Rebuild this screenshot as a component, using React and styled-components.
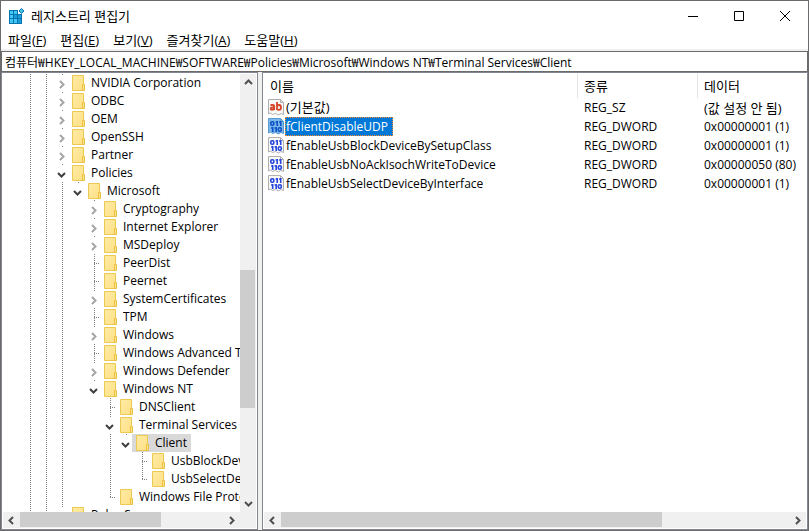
import React, { useState } from 'react';
import styled, { createGlobalStyle } from 'styled-components';

const colors = {
    frame: '#6b6b6e',
    paneBorder: '#828790',
    face: '#f0f0f0',
    thumb: '#cdcdcd',
    arrow: '#505050',
    dots: '#808080',
    select: '#0078d7',
};

const GlobalStyle = createGlobalStyle`
    * {
        box-sizing: border-box;
    }

    html, body, #root {
        height: 100%;
        margin: 0;
    }

    body, button, input {
        font-family: "Open Sans", "Noto Sans CJK KR", sans-serif;
        font-size: 12px;
        line-height: 18px;
        color: #000;
    }

    button {
        border: none;
        padding: 0;
        background: none;
    }
`;

/* each letter in cells is one 16px step of the indent:
   | line, - blank, t branch, l last branch, > closed, v open */
const keys = [
    { cells: '||>', name: 'NVIDIA Corporation' },
    { cells: '||>', name: 'ODBC' },
    { cells: '||>', name: 'OEM' },
    { cells: '||>', name: 'OpenSSH' },
    { cells: '||>', name: 'Partner' },
    { cells: '||v', name: 'Policies' },
    { cells: '|||v', name: 'Microsoft' },
    { cells: '|||->', name: 'Cryptography' },
    { cells: '|||->', name: 'Internet Explorer' },
    { cells: '|||->', name: 'MSDeploy' },
    { cells: '|||-t', name: 'PeerDist' },
    { cells: '|||-t', name: 'Peernet' },
    { cells: '|||->', name: 'SystemCertificates' },
    { cells: '|||-t', name: 'TPM' },
    { cells: '|||->', name: 'Windows' },
    { cells: '|||-t', name: 'Windows Advanced Threat Protection' },
    { cells: '|||->', name: 'Windows Defender' },
    { cells: '|||-v', name: 'Windows NT' },
    { cells: '|||--t', name: 'DNSClient' },
    { cells: '|||--v', name: 'Terminal Services' },
    { cells: '|||--|v', name: 'Client' },
    { cells: '|||--|-t', name: 'UsbBlockDeviceBySetupClasses' },
    { cells: '|||--|-l', name: 'UsbSelectDeviceByInterfaces' },
    { cells: '|||--l', name: 'Windows File Protection' },
    { cells: '||>', name: 'Pulse Secure' },
];

const values = [
    { name: '(기본값)', type: 'REG_SZ', data: '(값 설정 안 됨)' },
    { name: 'fClientDisableUDP', type: 'REG_DWORD', data: '0x00000001 (1)' },
    { name: 'fEnableUsbBlockDeviceBySetupClass', type: 'REG_DWORD', data: '0x00000001 (1)' },
    { name: 'fEnableUsbNoAckIsochWriteToDevice', type: 'REG_DWORD', data: '0x00000050 (80)' },
    { name: 'fEnableUsbSelectDeviceByInterface', type: 'REG_DWORD', data: '0x00000001 (1)' },
];

const menus = [
    ['파일', 'F'],
    ['편집', 'E'],
    ['보기', 'V'],
    ['즐겨찾기', 'A'],
    ['도움말', 'H'],
];

const Window = styled.div`
    display: flex;
    flex-direction: column;
    height: 100vh;
    border: 1px solid ${colors.frame};
    background: #fff;
    overflow: hidden;
`;

const TitleBar = styled.header`
    display: flex;
    align-items: center;
    height: 29px;
    padding-left: 7px;
    flex: none;
`;

const Title = styled.h1`
    flex: 1;
    margin: 0 0 0 6px;
    font-size: 13px;
    font-weight: normal;
`;

const CaptionButton = styled.button`
    display: flex;
    align-items: center;
    justify-content: center;
    width: 46px;
    height: 29px;
`;

const MenuBar = styled.nav`
    display: flex;
    height: 21px;
    flex: none;
    border-bottom: 2px solid ${colors.face};
`;

const MenuButton = styled.button`
    padding: 0 7px;
    font-size: 13px;
    white-space: nowrap;
`;

const Address = styled.input`
    flex: none;
    width: 100%;
    height: 21px;
    padding: 0 3px;
    border: 1px solid ${colors.frame};
    border-radius: 0;
    background: #fff;
    outline: none;
`;

const Panes = styled.main`
    display: flex;
    gap: 4px;
    flex: 1;
    min-height: 0;
    background: ${colors.face};
`;

const Pane = styled.section`
    display: flex;
    flex-direction: column;
    flex: ${props => (props.$width ? 'none' : '1')};
    width: ${props => props.$width || 'auto'};
    min-width: 0;
    padding: 1px;
    border: 1px solid ${colors.paneBorder};
    background: #fff;
`;

const PaneBody = styled.div`
    display: flex;
    flex: 1;
    min-height: 0;
`;

const Tree = styled.ul`
    flex: 1;
    min-width: 0;
    margin: 0;
    padding: 0 0 0 17px;
    list-style: none;
    overflow: hidden;
`;

const TreeRow = styled.li`
    display: flex;
    height: 18px;
    white-space: nowrap;
`;

const vertical = `repeating-linear-gradient(to bottom, ${colors.dots} 0 1px, transparent 1px 2px) 10px 0 / 1px`;
const across = `repeating-linear-gradient(to right, ${colors.dots} 0 1px, transparent 1px 2px) 10px 9px / 6px 1px no-repeat`;

const guides = {
    '|': `${vertical} 18px no-repeat`,
    '-': 'none',
    t: `${vertical} 18px no-repeat, ${across}`,
    l: `${vertical} 10px no-repeat, ${across}`,
};

const Guide = styled.span`
    flex: none;
    width: 16px;
    height: 18px;
    background: ${props => guides[props.$kind]};
`;

const Toggle = styled.button`
    display: flex;
    flex: none;
    align-items: center;
    justify-content: center;
    width: 16px;
    height: 18px;
    padding: 2px 0 0 3px;
    background: ${vertical} 2px no-repeat;
`;

const KeyLabel = styled.span`
    display: flex;
    align-items: center;
    gap: 5px;
    padding: 0 4px;
    background: ${props => (props.$selected ? '#d9d9d9' : 'transparent')};
    cursor: default;
`;

const ScrollBar = styled.div`
    display: flex;
    flex: none;
    flex-direction: ${props => (props.$vertical ? 'column' : 'row')};
    width: ${props => (props.$vertical ? '16px' : 'auto')};
    height: ${props => (props.$vertical ? 'auto' : '16px')};
    padding-right: ${props => props.$corner || '0'};
    background: ${colors.face};
`;

const ScrollButton = styled.button`
    display: flex;
    align-items: center;
    justify-content: center;
    flex: none;
    width: 17px;
    height: 17px;
`;

const Track = styled.div`
    display: flex;
    flex: 1;
    flex-direction: ${props => (props.$vertical ? 'column' : 'row')};
`;

const Space = styled.span`
    flex: ${props => props.$share};
`;

const Thumb = styled.span`
    flex: ${props => props.$share};
    margin: ${props => (props.$vertical ? '0 1px 0 0' : '0 0 1px')};
    background: ${colors.thumb};
`;

const ListBody = styled.div`
    flex: 1;
    min-width: 0;
    overflow: hidden;
`;

const ValueTable = styled.table`
    width: 100%;
    table-layout: fixed;
    border-collapse: separate;
    border-spacing: 0;
    white-space: nowrap;
`;

const HeadCell = styled.th`
    width: ${props => props.$width || 'auto'};
    height: 24px;
    padding: 0 6px;
    border-right: 1px solid ${props => (props.$width ? '#e5e5e5' : 'transparent')};
    font-size: 13px;
    font-weight: normal;
    text-align: left;
`;

const Cell = styled.td`
    height: 19px;
    padding: 0 0 0 ${props => (props.$name ? '4px' : '6px')};
    font-size: ${props => (props.$hangul ? '13px' : '12px')};
`;

const ValueName = styled.span`
    display: flex;
    align-items: center;
    height: 19px;
`;

const ValueText = styled.span`
    height: 19px;
    padding: 0 4px 0 0;
    border: 1px ${props => (props.$selected ? 'dotted #ff8728' : 'solid transparent')};
    line-height: 17px;
    color: ${props => (props.$selected ? '#fff' : '#000')};
    background: ${props => (props.$selected ? colors.select : 'transparent')};
`;

const Chevron = ({ to, color = colors.arrow }) => {
    const paths = {
        right: 'M3 1 L6.5 4.5 L3 8',
        left: 'M6 1 L2.5 4.5 L6 8',
        down: 'M1 3 L4.5 6.5 L8 3',
        up: 'M1 6 L4.5 2.5 L8 6',
    };
    return (
        <svg width="9" height="9" viewBox="0 0 9 9" aria-hidden="true">
            <path d={paths[to]} fill="none" stroke={color} strokeWidth="2" />
        </svg>
    );
};

const FolderIcon = () => (
    <svg width="14" height="16" viewBox="0 0 14 16" aria-hidden="true">
        <defs>
            <linearGradient id="folder" x1="0" y1="0" x2="1" y2="1">
                <stop offset="0" stopColor="#ffeba6" />
                <stop offset="1" stopColor="#ffe085" />
            </linearGradient>
        </defs>
        <path d="M0.5 0.5 H11.5 V15.5 H0.5 Z" fill="url(#folder)" stroke="#ecc94f" />
        <path d="M10.5 9.5 H12.5 V15.5 H10.5 Z" fill="#ffe48f" stroke="#e8c140" />
    </svg>
);

const AppIcon = () => (
    <svg width="17" height="16" viewBox="0 0 17 16" aria-hidden="true">
        <path d="M1 2 H10 V6 H14 V16 H1 Z" fill="#0873ad" />
        <path d="M2 3 H5 V6 H2 Z M6 3 H9 V6 H6 Z M2 7 H5 V10 H2 Z M2 11 H5 V15 H2 Z M6 11 H9 V15 H6 Z" fill="#41c8f5" />
        <path d="M6 7 H9 V10 H6 Z M10 7 H13 V10 H10 Z M10 11 H13 V15 H10 Z" fill="#1a9cdb" />
        <path d="M13.5 0.5 L16 3 L13.5 5.5 L11 3 Z" fill="#4bbfe8" stroke="#0873ad" />
    </svg>
);

const ValueIcon = ({ text, selected }) => {
    const ink = text ? '#d4472a' : selected ? '#0b50c8' : '#2746e0';
    return (
        <svg width="17" height="17" viewBox="0 0 17 17" aria-hidden="true">
            <path
                d="M0.5 0.5 H12.5 L15.5 3.5 V15.5 L13 14.5 L10.5 16 L7.5 14.5 L4.5 15.5 L2.5 14 L0.5 15 Z"
                fill={selected ? '#7ab7ea' : '#f8f8f8'}
                stroke={selected ? '#5b9bd0' : '#b0b0b0'}
            />
            <path d="M12.5 0.5 V3.5 H15.5" fill="none" stroke={selected ? '#5b9bd0' : '#b0b0b0'} />
            {text ? (
                <g fill="none" stroke={ink} strokeWidth="1.8">
                    <path d="M2.5 6 H5 Q6.2 6 6.2 7.5 V11 M6 8.5 H4 Q2.7 8.5 2.7 9.7 Q2.7 10.8 4 10.8 Q6 10.8 6 9" />
                    <path d="M9 3 V11 M9 7 Q9.5 6 11 6 Q13 6 13 8.5 Q13 10.8 11 10.8 Q9.5 10.8 9 10" />
                </g>
            ) : (
                <g fill="none" stroke={ink} strokeWidth="1.6">
                    <rect x="2.8" y="3.8" width="3" height="3.4" rx="1.2" />
                    <path d="M9.2 3 V8 M7.6 4 H9.2 M12.7 3 V8 M11.1 4 H12.7" />
                    <path d="M4.7 9 V14 M3.1 10 H4.7 M8.2 9 V14 M6.6 10 H8.2" />
                    <rect x="10.3" y="9.8" width="3" height="3.4" rx="1.2" />
                </g>
            )}
        </svg>
    );
};

const Scroll = ({ vertical: isVertical, corner, before, size, after }) => (
    <ScrollBar $vertical={isVertical} $corner={corner}>
        <ScrollButton aria-label={isVertical ? '위로' : '왼쪽으로'}>
            <Chevron to={isVertical ? 'up' : 'left'} />
        </ScrollButton>
        <Track $vertical={isVertical}>
            <Space $share={before} />
            <Thumb $vertical={isVertical} $share={size} />
            <Space $share={after} />
        </Track>
        <ScrollButton aria-label={isVertical ? '아래로' : '오른쪽으로'}>
            <Chevron to={isVertical ? 'down' : 'right'} />
        </ScrollButton>
    </ScrollBar>
);

const TreeKey = ({ item, selected }) => (
    <TreeRow>
        {item.cells.split('').map((kind, i) => {
            if (kind === '>' || kind === 'v') {
                return (
                    <Toggle key={i} aria-label={item.name} aria-expanded={kind === 'v'}>
                        <Chevron to={kind === 'v' ? 'down' : 'right'} color={kind === 'v' ? '#404040' : '#a6a6a6'} />
                    </Toggle>
                );
            }
            return <Guide key={i} $kind={kind} />;
        })}
        <KeyLabel $selected={selected}>
            <FolderIcon />
            {item.name}
        </KeyLabel>
    </TreeRow>
);

const App = () => {
    const [path, setPath] = useState(
        '컴퓨터₩HKEY_LOCAL_MACHINE₩SOFTWARE₩Policies₩Microsoft₩Windows NT₩Terminal Services₩Client'
    );
    const [selected, setSelected] = useState('fClientDisableUDP');

    return (
        <Window>
            <GlobalStyle />
            <TitleBar>
                <AppIcon />
                <Title>레지스트리 편집기</Title>
                <CaptionButton aria-label="최소화">
                    <svg width="10" height="10"><path d="M0 5.5 H10" stroke="#000" /></svg>
                </CaptionButton>
                <CaptionButton aria-label="최대화">
                    <svg width="10" height="10"><path d="M0.5 0.5 H9.5 V9.5 H0.5 Z" fill="none" stroke="#000" /></svg>
                </CaptionButton>
                <CaptionButton aria-label="닫기">
                    <svg width="10" height="10"><path d="M0 0 L10 10 M10 0 L0 10" stroke="#000" /></svg>
                </CaptionButton>
            </TitleBar>
            <MenuBar>
                {menus.map(([name, letter]) => (
                    <MenuButton key={letter}>{name}(<u>{letter}</u>)</MenuButton>
                ))}
            </MenuBar>
            <Address aria-label="주소" value={path} onChange={e => setPath(e.target.value)} />
            <Panes>
                <Pane $width="257px">
                    <PaneBody>
                        <Tree>
                            {keys.map(item => (
                                <TreeKey key={item.name} item={item} selected={item.name === 'Client'} />
                            ))}
                        </Tree>
                        <Scroll vertical before={179} size={138} after={87} />
                    </PaneBody>
                    <Scroll corner="16px" before={0} size={141} after={62} />
                </Pane>
                <Pane>
                    <ListBody>
                        <ValueTable>
                            <thead>
                                <tr>
                                    <HeadCell $width="314px">이름</HeadCell>
                                    <HeadCell $width="120px">종류</HeadCell>
                                    <HeadCell>데이터</HeadCell>
                                </tr>
                            </thead>
                            <tbody>
                                {values.map(v => (
                                    <tr key={v.name} onClick={() => setSelected(v.name)}>
                                        <Cell $name $hangul={v.type === 'REG_SZ'}>
                                            <ValueName>
                                                <ValueIcon text={v.type === 'REG_SZ'} selected={v.name === selected} />
                                                <ValueText $selected={v.name === selected}>{v.name}</ValueText>
                                            </ValueName>
                                        </Cell>
                                        <Cell>{v.type}</Cell>
                                        <Cell $hangul={v.type === 'REG_SZ'}>{v.data}</Cell>
                                    </tr>
                                ))}
                            </tbody>
                        </ValueTable>
                    </ListBody>
                    <Scroll before={0} size={381} after={127} />
                </Pane>
            </Panes>
        </Window>
    );
};

export default App;
